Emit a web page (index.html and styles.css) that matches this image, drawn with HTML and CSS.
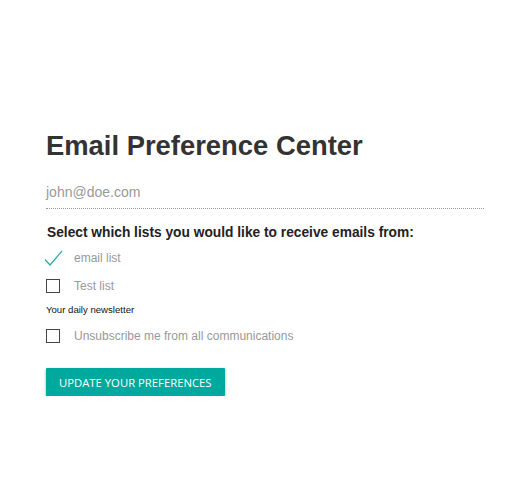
FILE: index.html
```html
<!DOCTYPE html>
<html>
<head>
<meta charset="utf-8">
<link rel="stylesheet" href="styles.css">
</head>
<body>
<div class="page">
  <h1 class="title">Email Preference Center</h1>
  <div class="email">john@doe.com</div>
  <h2 class="subtitle">Select which lists you would like to receive emails from:</h2>
  <div class="option">
    <span class="check">
      <svg width="19" height="16" viewBox="0 0 19 16"><path d="M1 9.5 L6 15 L18 1" fill="none" stroke="#26aa9d" stroke-width="1.2"/></svg>
    </span>
    <span class="label">email list</span>
  </div>
  <div class="option">
    <span class="box"></span>
    <span class="label">Test list</span>
  </div>
  <div class="desc">Your daily newsletter</div>
  <div class="option">
    <span class="box"></span>
    <span class="label">Unsubscribe me from all communications</span>
  </div>
  <button class="btn">UPDATE YOUR PREFERENCES</button>
</div>
</body>
</html>
```
FILE: styles.css
```css
html, body { margin: 0; padding: 0; background: #fff; }
.page {
  padding: 129px 44px 0 46px;
  font-family: "Liberation Sans", Arial, sans-serif;
}
.title {
  margin: 0;
  font-size: 27.4px;
  font-weight: bold;
  color: #333;
  line-height: 34px;
}
.email {
  margin-top: 21px;
  font-size: 14px;
  color: #999;
  line-height: 16px;
  padding-bottom: 8px;
  border-bottom: 1px dotted #999;
}
.subtitle {
  margin: 15px 0 2px 1px;
  font-size: 13.75px;
  font-weight: bold;
  color: #222;
  line-height: 18px;
}
.option {
  display: flex;
  align-items: center;
  height: 28px;
}
.check { width: 30px; margin-left: -2px; display: flex; align-items: center; }
.box {
  width: 12px; height: 12px;
  border: 1px solid #444;
  margin-right: 14px;
}
.label { font-size: 12px; color: #999; }
.desc { font-size: 9.6px; color: #111; line-height: 12px; margin: 4px 0 6px; }
.btn {
  display: block;
  margin-top: 18px;
  background: #00a99d;
  color: #fff;
  border: none;
  font-family: "Open Sans", sans-serif;
  font-size: 11.3px;
  height: 28px;
  padding: 0 13px;
  box-shadow: 0 1px 3px rgba(0,0,0,0.35);
  border-radius: 1px;
}
```
